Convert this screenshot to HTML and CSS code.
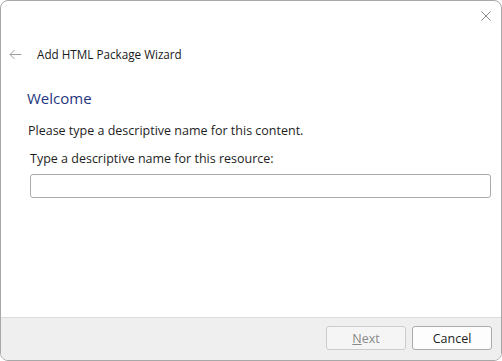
FILE: index.html
```html
<!DOCTYPE html>
<html>
<head>
<meta charset="utf-8">
<link rel="stylesheet" href="styles.css">
</head>
<body>
<div class="window">
  <div class="titlebar">
    <svg class="close" width="10" height="10" viewBox="0 0 10 10"><path d="M0.5 0.5 L9.5 9.5 M9.5 0.5 L0.5 9.5" stroke="#8a8a8a" stroke-width="1" fill="none"/></svg>
  </div>
  <div class="header">
    <svg class="back" width="13" height="11" viewBox="0 0 13 11"><path d="M12.5 5.5 H1 M5.5 1 L1 5.5 L5.5 10" stroke="#a0a0a0" stroke-width="1" fill="none"/></svg>
    <span class="title">Add HTML Package Wizard</span>
  </div>
  <div class="content">
    <div class="heading">Welcome</div>
    <div class="intro">Please type a descriptive name for this content.</div>
    <div class="label">Type a descriptive name for this resource:</div>
    <input class="field" type="text">
  </div>
  <div class="footer">
    <button class="btn disabled"><u>N</u>ext</button>
    <button class="btn">Cancel</button>
  </div>
</div>
</body>
</html>
```
FILE: styles.css
```css
html, body {
  margin: 0;
  padding: 0;
  background: #ffffff;
}
body {
  font-family: "Open Sans", "Noto Sans", sans-serif;
  font-size: 12px;
  color: #1e1e1e;
}
.window {
  box-sizing: border-box;
  width: 502px;
  height: 361px;
  border: 1px solid #a8a8a8;
  border-radius: 8px;
  display: flex;
  flex-direction: column;
  overflow: hidden;
  background: #fff;
}
.titlebar {
  height: 29px;
  display: flex;
  justify-content: flex-end;
  align-items: center;
  padding-right: 10px;
}
.close {
  display: block;
}
.header {
  margin-top: 14px;
  height: 20px;
  display: flex;
  align-items: center;
  padding-left: 8px;
}
.back {
  display: block;
  margin-right: 15px;
}
.title {
  font-size: 11.7px;
  color: #1a1a1a;
}
.content {
  flex: 1;
  display: flex;
  flex-direction: column;
  padding-left: 26px;
  padding-right: 10px;
}
.heading {
  margin-top: 24px;
  height: 20px;
  line-height: 20px;
  font-size: 15px;
  color: #1f3680;
}
.intro {
  margin-top: 15px;
  height: 16px;
  line-height: 16px;
  padding-left: 1px;
  font-size: 12.5px;
}
.label {
  margin-top: 12px;
  height: 16px;
  line-height: 16px;
  padding-left: 3px;
  font-size: 12.5px;
}
.field {
  box-sizing: border-box;
  margin: 7px 0 0 3px;
  width: 461px;
  height: 24px;
  border: 1px solid #ababab;
  border-radius: 3px;
  background: #fff;
  outline: none;
  padding: 0 4px;
}
.footer {
  box-sizing: border-box;
  height: 43px;
  border-top: 1px solid #dcdcdc;
  background: #efefef;
  display: flex;
  justify-content: flex-end;
  align-items: flex-start;
  gap: 6px;
  padding: 8px 9px 0 0;
}
.btn {
  box-sizing: border-box;
  width: 80px;
  height: 24px;
  border: 1px solid #acacac;
  border-radius: 3px;
  background: #fdfdfd;
  font-family: "Open Sans", "Noto Sans", sans-serif;
  font-size: 12.5px;
  color: #1e1e1e;
  padding: 0;
}
.btn.disabled {
  border-color: #cccccc;
  background: #f5f5f5;
  color: #8a8a8a;
}
```
